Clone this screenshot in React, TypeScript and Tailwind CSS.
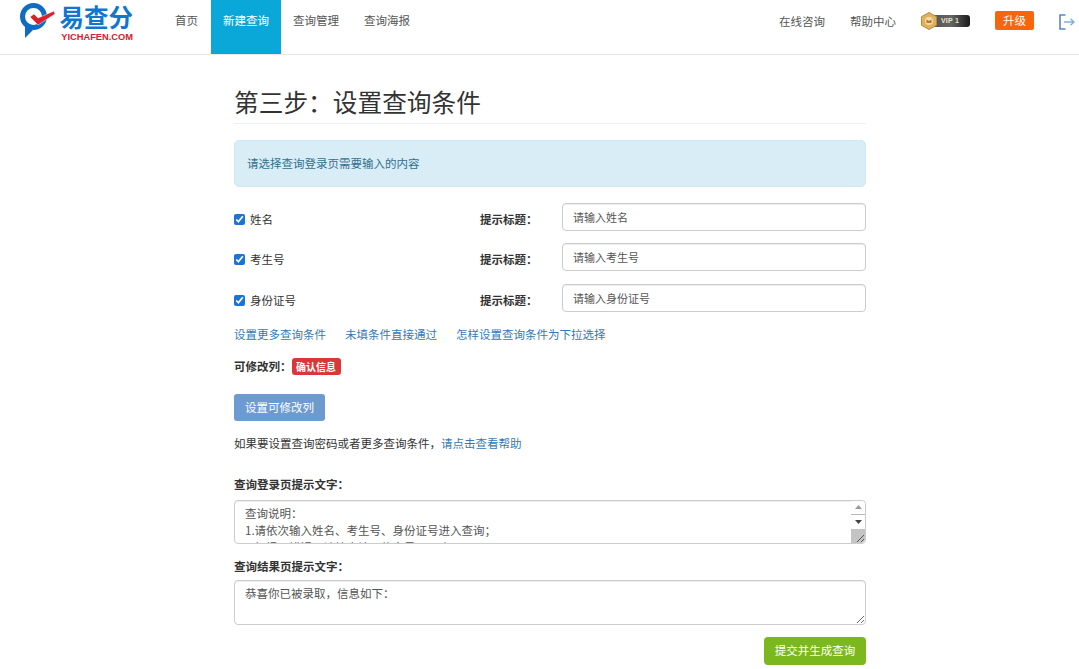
const font = { fontFamily: '"Noto Sans CJK SC", "Noto Sans", sans-serif' };

const fields = [
  { name: "姓名", placeholder: "请输入姓名" },
  { name: "考生号", placeholder: "请输入考生号" },
  { name: "身份证号", placeholder: "请输入身份证号" },
];

const navItems = ["首页", "新建查询", "查询管理", "查询海报"];

function Logo() {
  return (
    <div className="flex items-start w-[113px] h-[42px]">
      <svg width="37" height="38" viewBox="0 0 37 38" className="shrink-0">
        <circle cx="13.5" cy="13.5" r="11" fill="none" stroke="#0f6cc0" strokeWidth="5" />
        <path d="M5 23 L5 35 L13 27 Z" fill="#0f6cc0" />
        <path d="M10 14 L14 11 L18 15 L34 8 L35 11 L18 22 Z" fill="#d9202c" stroke="white" strokeWidth="0.5" />
      </svg>
      <div className="flex flex-col items-end ml-[2px] w-[74px]">
        <span className="text-[24.5px] leading-[28px] font-bold text-[#1276c9] whitespace-nowrap">易查分</span>
        <span className="text-[9.3px] leading-[9px] mt-[2px] font-bold text-[#d9202c] whitespace-nowrap" style={{ fontFamily: '"Liberation Sans", sans-serif' }}>
          YICHAFEN.COM
        </span>
      </div>
    </div>
  );
}

function VipBadge() {
  return (
    <div className="flex items-center">
      <svg width="16" height="18" viewBox="0 0 16 18" className="relative z-10 shrink-0">
        <path d="M8 0.5 L15.5 4.7 V13.3 L8 17.5 L0.5 13.3 V4.7 Z" fill="#e0b05c" stroke="#b98a3e" />
        <circle cx="8" cy="9" r="4" fill="#f3dca6" />
        <path d="M5.5 11 V7.5 L8 9 L10.5 7.5 V11 Z" fill="#a97a30" />
      </svg>
      <div className="w-[38px] h-[12px] -ml-[5px] pl-[9px] rounded-r-[3px] bg-gradient-to-r from-[#555] via-[#666] to-[#1c1c1c] text-[7px] leading-[12px] font-bold text-[#e8e0c8] tracking-[0.2px]" style={{ fontFamily: '"Liberation Sans", sans-serif' }}>
        VIP 1
      </div>
    </div>
  );
}

function LogoutIcon() {
  return (
    <svg width="16" height="16" viewBox="0 0 16 16" fill="none">
      <path d="M6.5 1 H1 V15 H6.5" stroke="#5b84cf" strokeWidth="1.6" />
      <path d="M5 8 H15 M11.5 4.8 L15 8 L11.5 11.2" stroke="#7fb0de" strokeWidth="1.4" />
    </svg>
  );
}

function Header() {
  return (
    <header className="h-[55px] border-b border-[#e7e7e7] bg-white flex items-stretch">
      <div className="pl-[20px] pt-[3px] w-[163px] shrink-0">
        <Logo />
      </div>
      <nav className="flex">
        {navItems.map((item) => (
          <a
            key={item}
            className={`px-[12px] pt-[12px] text-[11.5px] leading-[17px] ${
              item === "新建查询" ? "bg-[#0aa8d8] text-white" : "text-[#555]"
            } ${item === "查询海报" ? "ml-[1px]" : ""} ${item === "首页" ? "mr-[1px]" : ""}`}
          >
            {item}
          </a>
        ))}
      </nav>
      <div className="ml-auto flex items-start pt-[11px] pr-[4px] text-[11.5px] text-[#555]">
        <a className="leading-[20px] mr-[25px]">在线咨询</a>
        <a className="leading-[20px] mr-[25px]">帮助中心</a>
        <div className="mr-[25px] mt-[1px]">
          <VipBadge />
        </div>
        <button className="w-[39px] h-[19px] rounded-[2px] bg-[#f8650f] text-white text-[11.5px] leading-[19px] mr-[25px]">升级</button>
        <div className="mt-[3px]">
          <LogoutIcon />
        </div>
      </div>
    </header>
  );
}

function FieldRow({ name, placeholder }: { name: string; placeholder: string }) {
  return (
    <div className="flex items-center h-[28px]">
      <label className="w-[246px] pt-[5px] flex items-center text-[11.5px] text-[#333]">
        <input type="checkbox" defaultChecked className="w-[11px] h-[11px] m-0 mr-[5px] accent-[#1a73d8]" />
        {name}
      </label>
      <span className="w-[82px] pt-[5px] text-[11.5px] font-bold text-[#333]">提示标题：</span>
      <input
        defaultValue={placeholder}
        className="flex-1 h-[28px] min-w-0 px-[10px] rounded-[4px] border border-[#ccc] text-[11px] text-[#555] bg-white shadow-[inset_0_1px_1px_rgba(0,0,0,0.075)] outline-none"
      />
    </div>
  );
}

// the headless page hides native scrollbars, so this one is drawn over the textarea
function ScrollbarOverlay() {
  return (
    <div className="absolute right-[1px] top-[1px] bottom-[1px] w-[14px] flex flex-col items-center bg-white rounded-r-[4px] pointer-events-none">
      <div className="h-[14px] w-full flex items-center justify-center border-b border-[#bbb]">
        <svg width="7" height="4" viewBox="0 0 7 4"><path d="M0 4 L3.5 0 L7 4 Z" fill="#999" /></svg>
      </div>
      <div className="h-[14px] w-full flex items-center justify-center">
        <svg width="7" height="4" viewBox="0 0 7 4"><path d="M0 0 L7 0 L3.5 4 Z" fill="#444" /></svg>
      </div>
      <div className="mt-auto h-[14px] w-full bg-[#c4c4c4] rounded-br-[4px] flex items-end justify-end">
        <svg width="9" height="9" viewBox="0 0 9 9"><path d="M1 8 L8 1 M5 8 L8 5" stroke="#555" strokeWidth="1" /></svg>
      </div>
    </div>
  );
}

export default function App() {
  return (
    <div className="h-[669px] overflow-hidden bg-white" style={font}>
      <Header />
      <main className="w-[632px] ml-[234px]">
        <h1 className="text-[24.7px] leading-[34px] font-normal text-[#333] mt-[29px] pb-[5px] border-b border-[#eee]">第三步：设置查询条件</h1>

        <div className="mt-[16px] h-[47px] rounded-[5px] border border-[#cfe7f3] bg-[#d9edf7] px-[12px] flex items-center text-[11.5px] text-[#31708f]">
          请选择查询登录页需要输入的内容
        </div>

        <div className="mt-[15.9px] flex flex-col gap-[12.5px]">
          {fields.map((f) => (
            <FieldRow key={f.name} name={f.name} placeholder={f.placeholder} />
          ))}
        </div>

        <div className="mt-[13px] flex gap-[19px] text-[11.5px] leading-[18px] text-[#337ab7]">
          <a>设置更多查询条件</a>
          <a>未填条件直接通过</a>
          <a>怎样设置查询条件为下拉选择</a>
        </div>

        <div className="mt-[15px] flex items-center h-[18px] text-[11.5px]">
          <span className="font-bold text-[#333]">可修改列：</span>
          <span className="w-[49px] h-[17px] text-center rounded-[3px] bg-[#d9383a] text-white font-bold text-[10px] leading-[17px]">确认信息</span>
        </div>

        <button className="mt-[18px] block w-[91px] h-[27px] rounded-[3px] bg-[#6d9bd1] text-white text-[11.5px]">设置可修改列</button>

        <p className="mt-[13px] text-[11.5px] leading-[18px] text-[#333]">
          如果要设置查询密码或者更多查询条件，<a className="text-[#337ab7]">请点击查看帮助</a>
        </p>

        <label className="block mt-[23px] text-[11.5px] leading-[18px] font-bold text-[#333]">查询登录页提示文字：</label>
        <div className="relative mt-[7px]">
          <textarea
            readOnly
            className="block w-full h-[44px] px-[10px] py-[4px] rounded-[4px] border border-[#ccc] text-[11.5px] leading-[17px] text-[#555] outline-none shadow-[inset_0_1px_1px_rgba(0,0,0,0.075)]"
            defaultValue={"查询说明：\n1.请依次输入姓名、考生号、身份证号进入查询；\n2.如提示错误，请检查填写信息是否正确。\n3.如有疑问请联系管理员。"}
          />
          <ScrollbarOverlay />
        </div>

        <label className="block mt-[13px] text-[11.5px] leading-[18px] font-bold text-[#333]">查询结果页提示文字：</label>
        <textarea
          readOnly
          className="block mt-[5px] w-full h-[45px] px-[10px] py-[4px] rounded-[4px] border border-[#ccc] text-[11.5px] leading-[17px] text-[#555] outline-none shadow-[inset_0_1px_1px_rgba(0,0,0,0.075)]"
          defaultValue="恭喜你已被录取，信息如下："
        />

        <div className="mt-[12px] flex justify-end">
          <button className="w-[102px] h-[28px] rounded-[4px] bg-[#7ab81e] text-white text-[11.5px]">提交并生成查询</button>
        </div>
      </main>
    </div>
  );
}
